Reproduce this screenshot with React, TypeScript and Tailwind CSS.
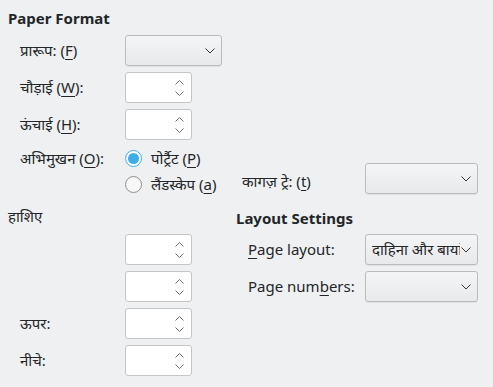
const font = { fontFamily: '"Noto Sans", "Noto Sans Devanagari", sans-serif' };

function Chevron({ className = "" }: { className?: string }) {
  return (
    <svg width="10" height="6" viewBox="0 0 10 6" className={className}>
      <path d="M0.5 0.5 L5 5 L9.5 0.5" fill="none" stroke="currentColor" strokeWidth="1" />
    </svg>
  );
}

function Combo({ width, text }: { width: string; text?: string }) {
  return (
    <div
      className={`${width} h-[31px] flex items-center justify-between pl-[6px] pr-[6px] rounded-[3px] border border-[#b9bbbd] bg-gradient-to-b from-[#f4f5f6] to-[#e8e9ea] shadow-[0_1px_0_rgba(0,0,0,0.06)] text-[#232629]`}
    >
      <span className="whitespace-nowrap overflow-hidden">{text}</span>
      <Chevron className="shrink-0 ml-[1px] text-[#31363b]" />
    </div>
  );
}

function Spin() {
  return (
    <div className="w-[67px] h-[31px] flex items-center justify-end pr-[7px] rounded-[3px] border border-[#c3c5c7] bg-white">
      <div className="flex flex-col gap-[6px] text-[#6d7073]">
        <svg width="9" height="5" viewBox="0 0 9 5">
          <path d="M0.5 4.5 L4.5 0.5 L8.5 4.5" fill="none" stroke="currentColor" strokeWidth="1" />
        </svg>
        <svg width="9" height="5" viewBox="0 0 9 5">
          <path d="M0.5 0.5 L4.5 4.5 L8.5 0.5" fill="none" stroke="currentColor" strokeWidth="1" />
        </svg>
      </div>
    </div>
  );
}

function Radio({ checked }: { checked?: boolean }) {
  return checked ? (
    <div className="w-[17px] h-[17px] rounded-full border border-[#3daee9] bg-white flex items-center justify-center">
      <div className="w-[11px] h-[11px] rounded-full bg-[#3daee9]" />
    </div>
  ) : (
    <div className="w-[17px] h-[17px] rounded-full border border-[#8b8d8f] bg-[#f7f7f7]" />
  );
}

function Label({ children }: { children?: React.ReactNode }) {
  return <div className="w-[117px] shrink-0 pl-[12px] whitespace-nowrap">{children}</div>;
}

const U = ({ children }: { children: React.ReactNode }) => (
  <span className="underline underline-offset-[3px] decoration-1">{children}</span>
);

export default function App() {
  return (
    <div
      style={font}
      className="w-[493px] h-[387px] bg-[#eff0f1] text-[#232629] text-[15px] px-[8px] pt-[7px] overflow-hidden"
    >
      <div className="font-bold text-[15px] h-[22px] leading-[22px]">Paper Format</div>

      <div className="flex flex-col gap-[6px] mt-[6px]">
        <div className="flex items-center h-[31px]">
          <Label>
            प्रारूप: (<U>F</U>)
          </Label>
          <Combo width="w-[97px]" />
        </div>
        <div className="flex items-center h-[31px]">
          <Label>
            चौड़ाई (<U>W</U>):
          </Label>
          <Spin />
        </div>
        <div className="flex items-center h-[31px]">
          <Label>
            ऊंचाई (<U>H</U>):
          </Label>
          <Spin />
        </div>
      </div>

      <div className="flex items-end mt-[5px]">
        <div className="flex flex-col w-[234px] shrink-0">
          <div className="flex items-center h-[26px]">
            <Label>
              अभिमुखन (<U>O</U>):
            </Label>
            <Radio checked />
            <span className="ml-[9px] whitespace-nowrap">
              पोर्ट्रैट (<U>P</U>)
            </span>
          </div>
          <div className="flex items-center h-[26px]">
            <Label />
            <Radio />
            <span className="ml-[9px] whitespace-nowrap">
              लैंडस्केप (<U>a</U>)
            </span>
          </div>
        </div>
        <div className="flex items-center mb-[3px]">
          <div className="w-[123px] pt-[5px] whitespace-nowrap">
            कागज़ ट्रे: (<U>t</U>)
          </div>
          <Combo width="w-[113px]" />
        </div>
      </div>

      <div className="flex mt-[7px]">
        <div className="w-[228px] shrink-0">
          <div className="h-[24px] leading-[24px]">हाशिए</div>
          <div className="flex flex-col gap-[6px] mt-[6px]">
            <div className="flex items-center h-[31px]">
              <Label />
              <Spin />
            </div>
            <div className="flex items-center h-[31px]">
              <Label />
              <Spin />
            </div>
            <div className="flex items-center h-[31px]">
              <Label>ऊपर:</Label>
              <Spin />
            </div>
            <div className="flex items-center h-[31px]">
              <Label>नीचे:</Label>
              <Spin />
            </div>
          </div>
        </div>
        <div className="flex-1">
          <div className="font-bold h-[24px] leading-[24px] pt-[2px]">Layout Settings</div>
          <div className="flex flex-col gap-[6px] mt-[6px]">
            <div className="flex items-center h-[31px]">
              <div className="w-[129px] shrink-0 pl-[12px] whitespace-nowrap">
                <U>P</U>age layout:
              </div>
              <Combo width="w-[113px]" text="दाहिना और बायां" />
            </div>
            <div className="flex items-center h-[31px]">
              <div className="w-[129px] shrink-0 pl-[12px] whitespace-nowrap">
                Page num<U>b</U>ers:
              </div>
              <Combo width="w-[113px]" />
            </div>
          </div>
        </div>
      </div>
    </div>
  );
}
